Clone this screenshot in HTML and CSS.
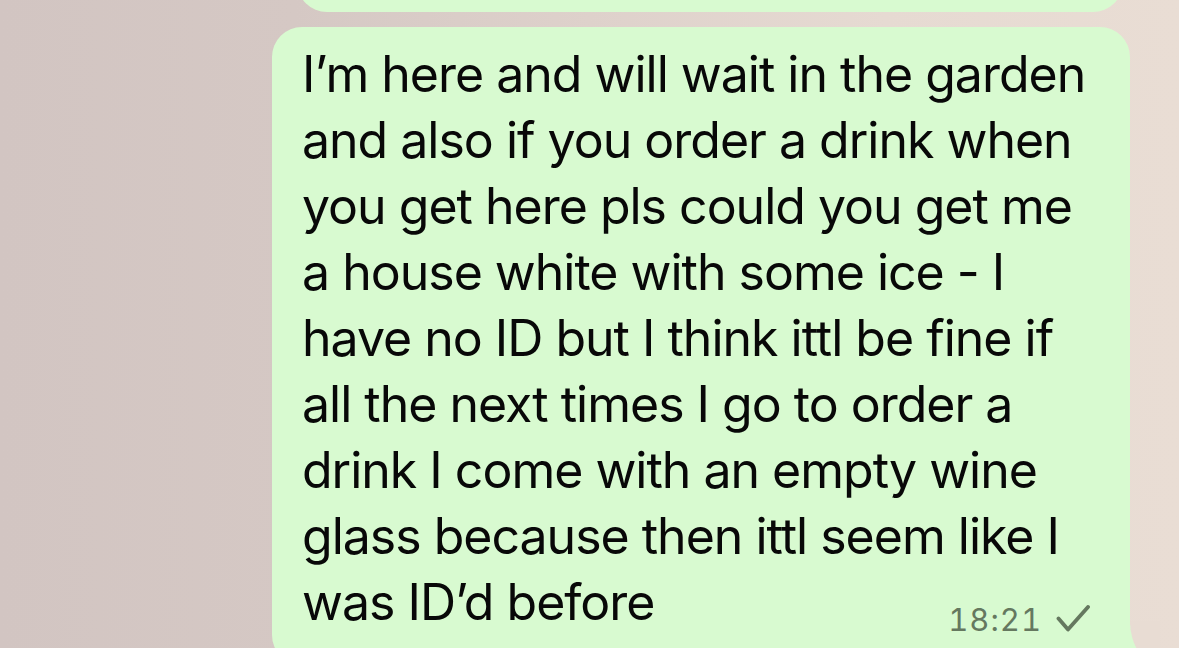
FILE: index.html
```html
<!DOCTYPE html>
<html lang="en">
<head>
  <meta charset="UTF-8" />
  <meta name="viewport" content="width=device-width, initial-scale=1.0" />
  <title>Chat</title>
  <link rel="stylesheet" href="styles.css">
</head>
<body>
  <div class="chat">
    <!-- previous message, mostly scrolled away -->
    <div class="bubble bubble-prev"></div>

    <div class="bubble bubble-out">
      <p class="msg">I’m here and will wait in the garden<br>
        and also if you order a drink when<br>
        you get here pls could you get me<br>
        a house white with some ice - I<br>
        have no ID but I think ittl be fine if<br>
        all the next times I go to order a<br>
        drink I come with an empty wine<br>
        glass because then ittl seem like I</p>
      <div class="last-row">
        <span class="msg">was ID’d before</span>
        <span class="meta"><span class="time">18:21</span>
          <svg class="tick" width="34" height="28" viewBox="0 0 34 28" aria-hidden="true">
            <path d="M2.5 13.5 L12 24.5 L32 2" fill="none" stroke="currentColor" stroke-width="3.8" stroke-linecap="round" stroke-linejoin="round"/>
          </svg>
        </span>
      </div>
    </div>
  </div>
</body>
</html>
```

FILE: styles.css
```css
/* ─── Chat screenshot ─────────────────────────────── */
:root {
  --bubble: #d8fad0;
  --ink: #080808;
  --meta: #65785f;
  --wall-right: #e8dcd3;
}
*, *::before, *::after { box-sizing: border-box; }
html, body { margin: 0; height: 100%; }
body {
  overflow: hidden;
  background: linear-gradient(90deg, #d2c5c2 0%, #d5c8c4 25%, #ded1cb 50%, #e6dad2 75%, #e9ddd4 100%);
  font-family: Inter, "Liberation Sans", sans-serif;
  color: var(--ink);
}

.chat {
  display: flex;
  flex-direction: column;
  align-items: flex-end;
  gap: 15px;
  padding-right: 49px;
}

.bubble {
  background: var(--bubble);
  border-radius: 30px;
  position: relative;
}

.bubble-prev {
  width: 826px;
  height: 60px;
  margin-top: -48px;
  margin-right: 7px;
}

.bubble-out {
  width: 858px;
  padding: 14px 40px 30px 30px;
}

/* tail of the outgoing bubble, bottom right */
.bubble-out::after {
  content: "";
  position: absolute;
  right: -14px;
  bottom: 0;
  width: 28px;
  height: 40px;
  background: var(--bubble);
  z-index: -1;
}
.bubble-out::before {
  content: "";
  position: absolute;
  right: -30px;
  bottom: 0;
  width: 30px;
  height: 44px;
  background: var(--wall-right);
  border-bottom-left-radius: 100% 100%;
}

.msg {
  margin: 0;
  font-size: 50px;
  line-height: 66px;
  letter-spacing: -1px;
  white-space: nowrap;
}

.last-row {
  display: flex;
  justify-content: space-between;
  align-items: flex-end;
}

.meta {
  display: flex;
  align-items: flex-end;
  gap: 14px;
  color: var(--meta);
}
.time {
  font-size: 31px;
  line-height: 31px;
  font-variant-numeric: tabular-nums;
  letter-spacing: 1px;
}
.tick { display: block; margin-bottom: 2px; }
```
